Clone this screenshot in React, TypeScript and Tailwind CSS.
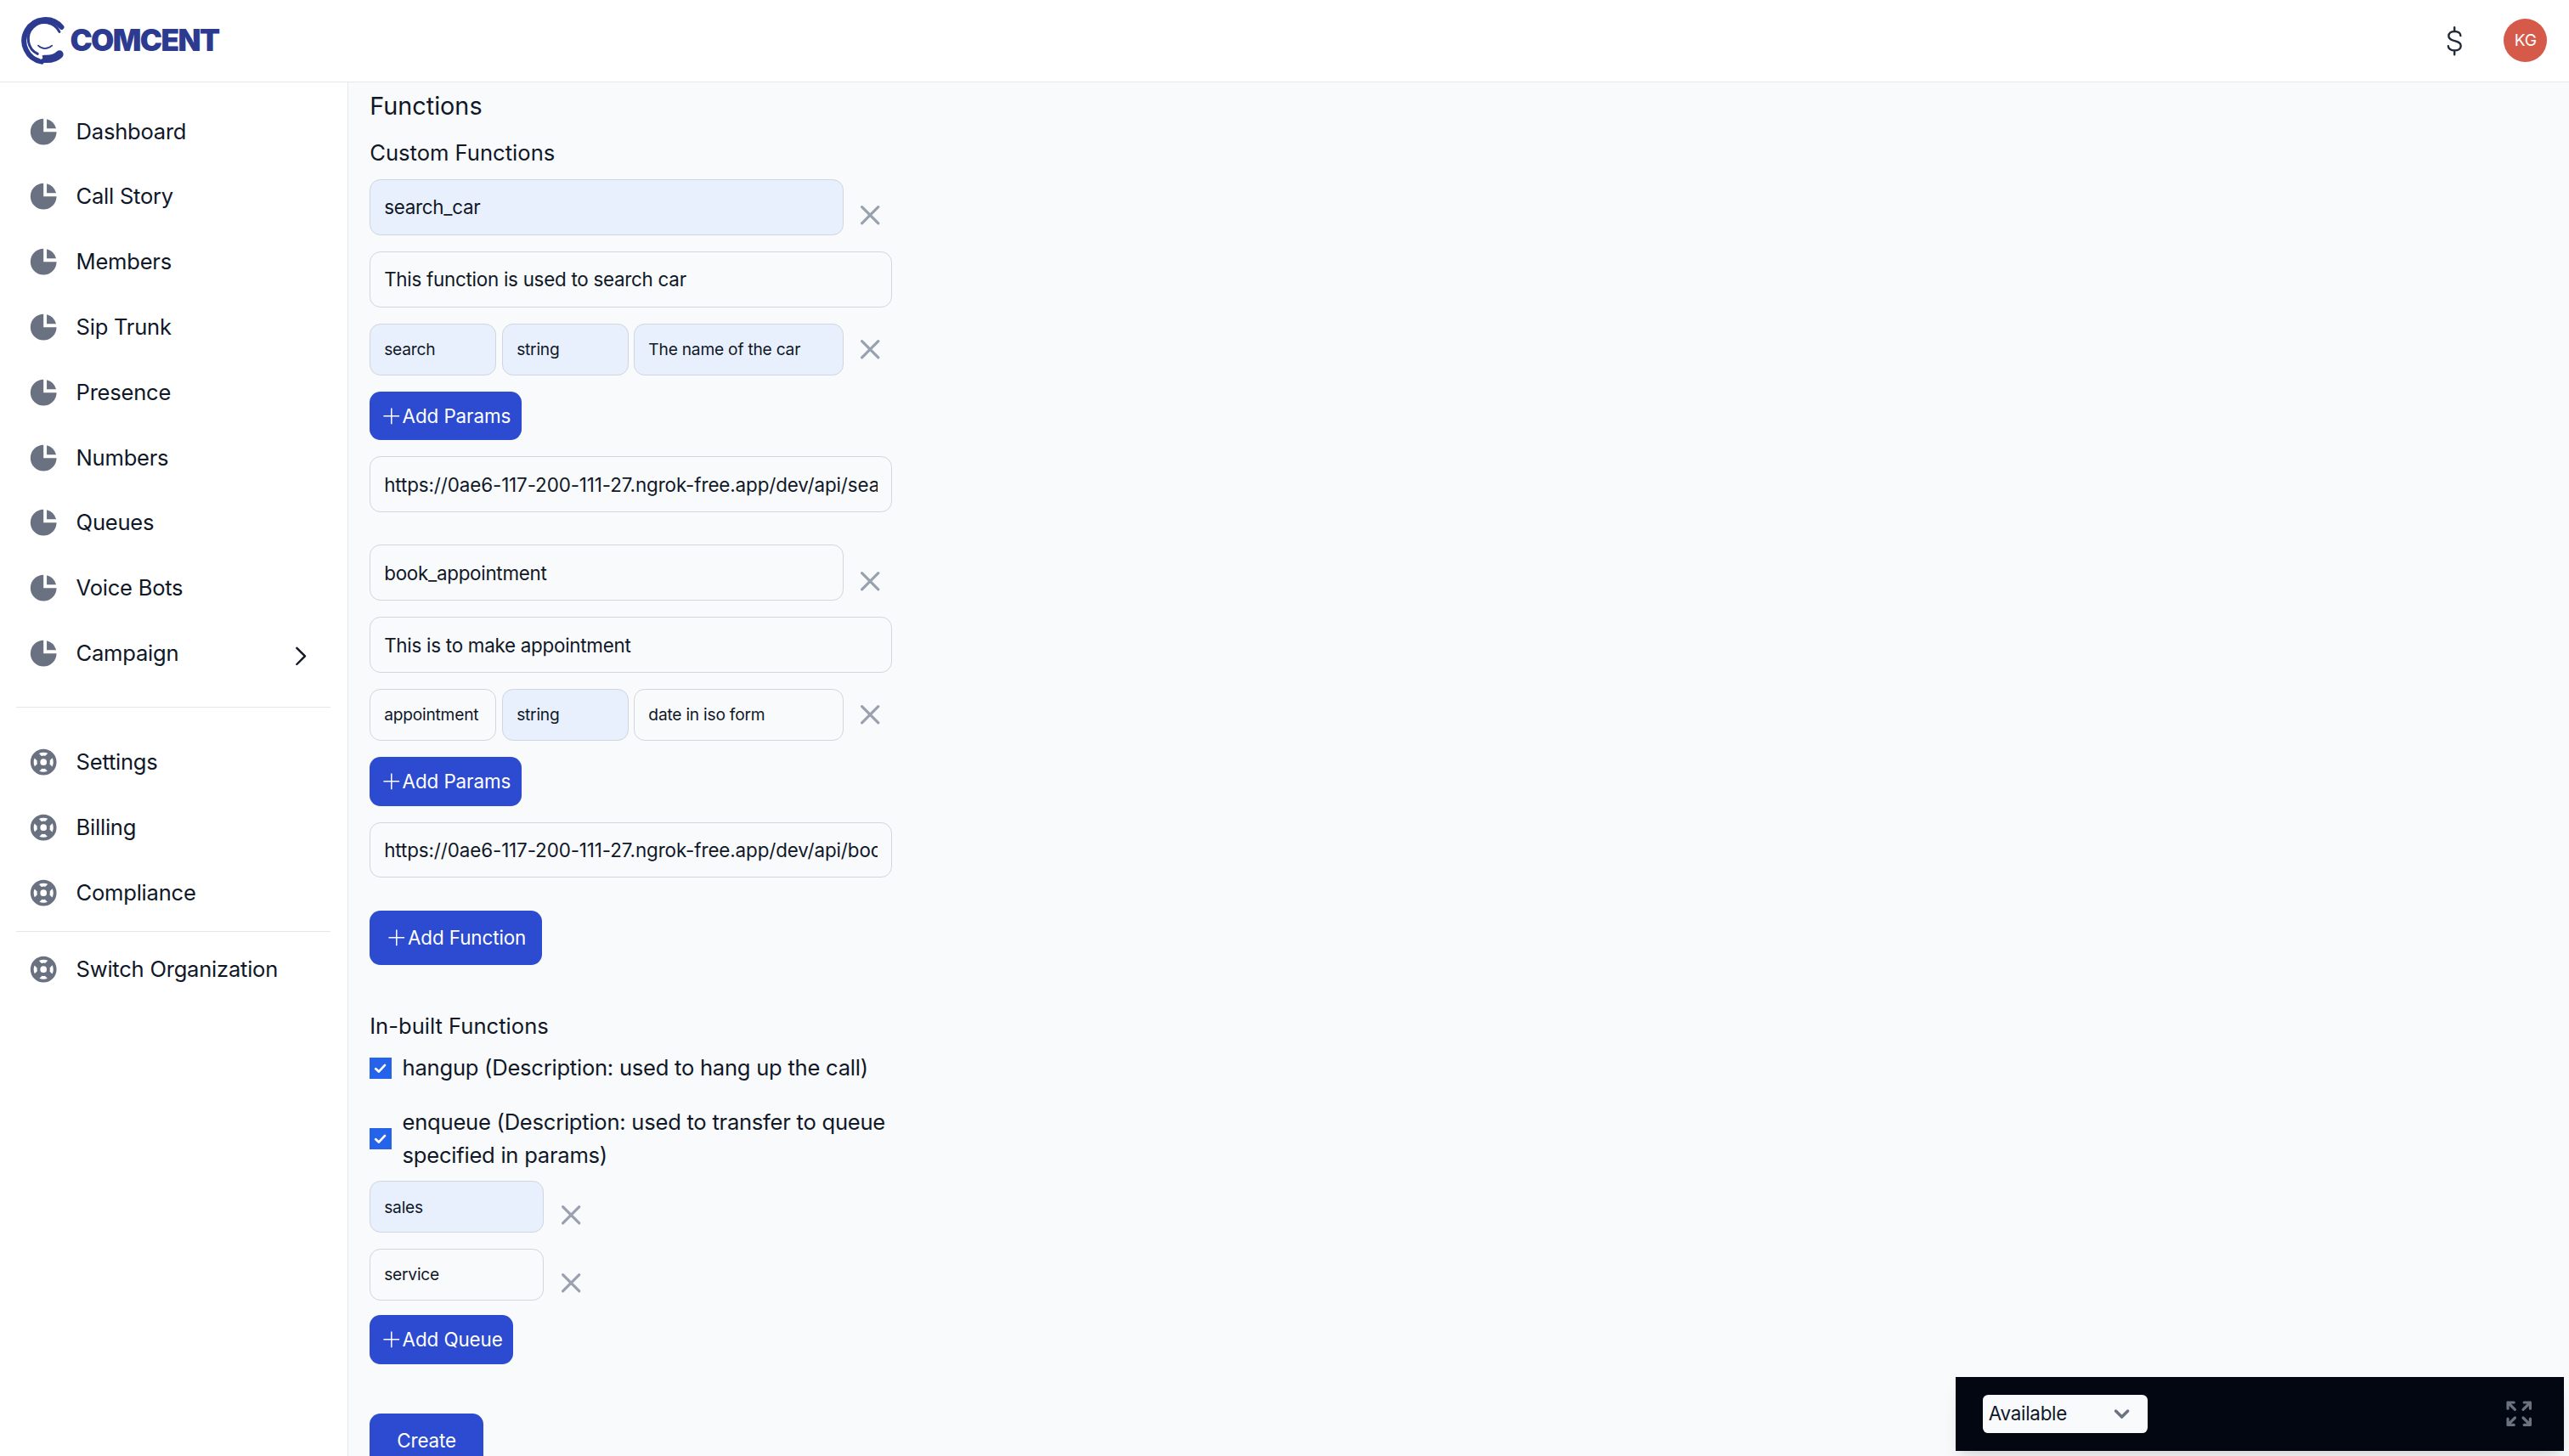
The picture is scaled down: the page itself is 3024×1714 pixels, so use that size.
import React from 'react';

const pie = (
  <>
    <path d="M2 10a8 8 0 018-8v8h8a8 8 0 11-16 0z" />
    <path d="M12 2.252A8.014 8.014 0 0117.748 8H12V2.252z" />
  </>
);

const ring = (
  <path
    fillRule="evenodd"
    clipRule="evenodd"
    d="M18 10a8 8 0 11-16 0 8 8 0 0116 0zm-2 0c0 .993-.241 1.929-.668 2.754l-1.524-1.525a3.997 3.997 0 00.078-2.183l1.562-1.562C15.802 8.249 16 9.1 16 10zm-5.165 3.913l1.58 1.58A5.98 5.98 0 0110 16a5.976 5.976 0 01-2.516-.552l1.562-1.562a4.006 4.006 0 001.789.027zm-4.677-2.796a4.002 4.002 0 01-.041-2.08l-.08.08-1.53-1.533A5.98 5.98 0 004 10c0 .954.223 1.856.619 2.657l1.54-1.54zm1.088-6.45A5.974 5.974 0 0110 4c.954 0 1.856.223 2.657.619l-1.54 1.54a4.002 4.002 0 00-2.346.033L7.246 4.668zM12 10a2 2 0 11-4 0 2 2 0 014 0z"
  />
);

function NavItem({ label, icon, chevron }: { label: string; icon: React.ReactNode; chevron?: boolean }) {
  return (
    <li className="flex items-center p-2 text-base text-gray-900">
      <svg viewBox="0 0 20 20" fill="currentColor" className="w-6 h-6 text-gray-500">
        {icon}
      </svg>
      <span className="ml-3 flex-1">{label}</span>
      {chevron && (
        <svg viewBox="0 0 24 24" fill="none" stroke="currentColor" strokeWidth="1.5" className="w-6 h-6 translate-y-0.5 mr-0.5">
          <path strokeLinecap="round" strokeLinejoin="round" d="M9 6l6 6-6 6" />
        </svg>
      )}
    </li>
  );
}

function Logo() {
  return (
    <div className="flex items-center -ml-[0.5px]">
      <svg viewBox="78 60 152 168" className="w-8 h-[35px] text-[#2c3a8f]" fill="none" stroke="currentColor">
        <path d="M219.5 95.8A75 75 0 1 0 149 218" strokeWidth="18" strokeLinecap="round" />
        <path d="M212 112A58 58 0 1 0 135 190" strokeWidth="9" strokeLinecap="round" />
        <path d="M160 208Q195 210 212 192" strokeWidth="28" strokeLinecap="round" />
        <path d="M137 161Q160 182 186 161" strokeWidth="5" strokeLinecap="round" />
        <circle cx="147" cy="203" r="6" fill="#fff" stroke="none" />
      </svg>
      <span className="ml-[4px] text-[22px] leading-none font-black tracking-[-1px] text-[#2c3a8f]">COMCENT</span>
    </div>
  );
}

function Field({ value, autofill, small, url, className }: { value: string; autofill?: boolean; small?: boolean; url?: boolean; className?: string }) {
  return (
    <input
      readOnly
      value={value}
      className={`block rounded-lg border border-gray-300 px-2.5 text-gray-900 outline-none ${small ? 'h-[38px] text-xs tracking-[-0.005em]' : 'h-[41px] text-sm'} ${url ? 'tracking-[-0.005em]' : 'tracking-[-0.012em]'} ${autofill ? 'bg-[#e8f0fe]' : 'bg-gray-50'} ${className ?? ''}`}
    />
  );
}

function Close({ className }: { className?: string }) {
  return (
    <button className={`text-gray-400 ${className ?? 'ml-2'}`}>
      <svg viewBox="0 0 24 24" fill="none" stroke="currentColor" strokeWidth="2" className="w-6 h-6">
        <path strokeLinecap="round" strokeLinejoin="round" d="M6 18L18 6M6 6l12 12" />
      </svg>
    </button>
  );
}

function AddButton({ label, wide, className }: { label: string; wide?: boolean; className?: string }) {
  return (
    <button className={`flex items-center rounded-lg bg-[#2c4bd1] text-sm tracking-[-0.004em] text-white ${wide ? 'h-10 px-3' : 'h-9 px-2'} ${className ?? ''}`}>
      <svg viewBox="0 0 24 24" fill="none" stroke="currentColor" strokeWidth="1.4" className="w-4 h-4">
        <path d="M12 3.25v17.5M3.25 12h17.5" />
      </svg>
      <span>{label}</span>
    </button>
  );
}

function CustomFunction({ fn }: { fn: { name: string; nameFill?: boolean; desc: string; params: { text: string; fill?: boolean }[]; url: string } }) {
  return (
    <div className="mb-6">
      <div className="flex items-center w-[384px]">
        <Field value={fn.name} autofill={fn.nameFill} className="w-[348.5px] mb-3" />
        <Close className="ml-[7.5px]" />
      </div>
      <Field value={fn.desc} className="w-[384px] mb-3" />
      <div className="flex items-center mb-3">
        <div className="flex w-[348.5px]">
          <Field small value={fn.params[0].text} autofill={fn.params[0].fill} className="w-[93px]" />
          <Field small value={fn.params[1].text} autofill={fn.params[1].fill} className="w-[93px] ml-[4.5px]" />
          <Field small value={fn.params[2].text} autofill={fn.params[2].fill} className="w-[154px] ml-1" />
        </div>
        <Close className="ml-[7.5px]" />
      </div>
      <AddButton label="Add Params" className="mb-3" />
      <Field url value={fn.url} className="w-[384px]" />
    </div>
  );
}

const functions = [
  {
    name: 'search_car',
    nameFill: true,
    desc: 'This function is used to search car',
    params: [{ text: 'search', fill: true }, { text: 'string', fill: true }, { text: 'The name of the car', fill: true }],
    url: 'https://0ae6-117-200-111-27.ngrok-free.app/dev/api/search_car',
  },
  {
    name: 'book_appointment',
    desc: 'This is to make appointment',
    params: [{ text: 'appointment' }, { text: 'string', fill: true }, { text: 'date in iso form' }],
    url: 'https://0ae6-117-200-111-27.ngrok-free.app/dev/api/book_appointment',
  },
];

function Check() {
  return (
    <span className="flex w-4 h-4 shrink-0 items-center justify-center bg-[#2563eb]">
      <svg viewBox="0 0 12 12" fill="none" stroke="#fff" strokeWidth="1.7" className="w-3 h-3">
        <path strokeLinecap="round" strokeLinejoin="round" d="M2.6 6.3l2.3 2.2 4.5-4.8" />
      </svg>
    </span>
  );
}

export default function App() {
  return (
    <div className="relative w-[1890px] h-[1071.25px] overflow-hidden bg-gray-50 tracking-[-0.01em] [zoom:1.6] [font-family:Inter,sans-serif]">
      <header className="flex items-center justify-between h-[60.5px] pl-4 pr-4 bg-white border-b border-gray-200">
        <Logo />
        <div className="flex items-center">
          <svg viewBox="0 0 24 24" fill="none" stroke="#1f2937" strokeWidth="1.5" className="w-6 h-6 mr-6">
            <path strokeLinecap="round" d="M12 2v3M12 19v3M16.5 8.2C16.5 6.2 14.6 5 12 5S7.7 6.3 7.7 8.4c0 4.6 9 2.6 9 7.2 0 2.1-2 3.4-4.6 3.4s-4.7-1.3-4.7-3.2" />
          </svg>
          <div className="flex w-8 h-8 items-center justify-center rounded-full bg-[#d55a4a] text-xs text-white">KG</div>
        </div>
      </header>
      <div className="flex h-[1010.75px]">
        <aside className="w-64 shrink-0 px-3 pt-[16.3px] bg-white border-r border-gray-200">
          <ul className="space-y-2">
            {['Dashboard', 'Call Story', 'Members', 'Sip Trunk', 'Presence', 'Numbers', 'Queues', 'Voice Bots'].map((l) => (
              <NavItem key={l} label={l} icon={pie} />
            ))}
            <NavItem label="Campaign" icon={pie} chevron />
          </ul>
          <ul className="mt-[19.5px] pt-5 space-y-2 border-t border-gray-200">
            {['Settings', 'Billing', 'Compliance'].map((l) => (
              <NavItem key={l} label={l} icon={ring} />
            ))}
          </ul>
          <ul className="mt-2 pt-2 border-t border-gray-200">
            <NavItem label="Switch Organization" icon={ring} />
          </ul>
        </aside>
        <main className="flex-1 px-4 pt-1 text-gray-900">
          <h2 className="mb-2 text-lg font-normal tracking-normal">Functions</h2>
          <h3 className="mb-[7.5px] text-base font-normal tracking-normal">Custom Functions</h3>
          {functions.map((fn) => (
            <CustomFunction key={fn.name} fn={fn} />
          ))}
          <AddButton label="Add Function" wide />
          <h3 className="mt-[33px] mb-[7px] text-base font-normal tracking-normal">In-built Functions</h3>
          <div className="flex items-center mb-4 w-[384px]">
            <Check />
            <span className="ml-2">hangup (Description: used to hang up the call)</span>
          </div>
          <div className="flex items-center mb-[7px] w-[384px]">
            <Check />
            <span className="ml-2">enqueue (Description: used to transfer to queue specified in params)</span>
          </div>
          {[{ v: 'sales', fill: true }, { v: 'service', fill: false }].map((q) => (
            <div key={q.v} className="flex items-center">
              <Field small value={q.v} autofill={q.fill} className="w-32 h-[37px] mb-3" />
              <Close />
            </div>
          ))}
          <AddButton label="Add Queue" className="-mt-px" />
          <button className="block mt-[36px] h-10 px-5 rounded-lg bg-[#2c4bd1] text-sm tracking-[-0.004em] text-white">Create</button>
        </main>
      </div>
      <div className="absolute right-1 bottom-1 flex items-center justify-between w-[447px] h-[54px] pl-5 pr-[21px] bg-gray-950 shadow-lg">
        <div className="flex items-center justify-between w-[121px] h-[28.5px] pl-1 pr-2 rounded-sm bg-gray-50 text-sm text-gray-900">
          <span>Available</span>
          <svg viewBox="0 0 20 20" fill="none" stroke="#6b7280" strokeWidth="2" className="w-[22px] h-[22px]">
            <path strokeLinecap="round" strokeLinejoin="round" d="M6 8l4 4 4-4" />
          </svg>
        </div>
        <svg viewBox="0 0 24 24" fill="none" stroke="#6b7280" strokeWidth="2" className="w-6 h-6">
          <path strokeLinecap="round" strokeLinejoin="round" d="M3.75 3.75v4.5m0-4.5h4.5m-4.5 0L9 9M3.75 20.25v-4.5m0 4.5h4.5m-4.5 0L9 15M20.25 3.75h-4.5m4.5 0v4.5m0-4.5L15 9m5.25 11.25h-4.5m4.5 0v-4.5m0 4.5L15 15" />
        </svg>
      </div>
    </div>
  );
}
